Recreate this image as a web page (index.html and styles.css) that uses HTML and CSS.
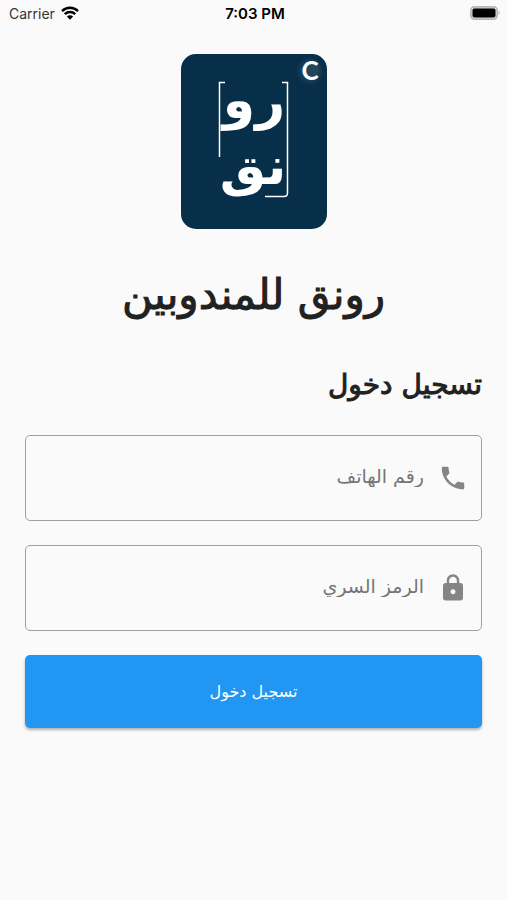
FILE: index.html
```html
<!DOCTYPE html>
<html lang="ar" dir="rtl">
<head>
    <meta charset="UTF-8">
    <meta name="viewport" content="width=device-width, initial-scale=1.0">
    <title>رونق للمندوبين</title>
    <link rel="stylesheet" href="styles.css">
</head>
<body>

    <header class="status-bar" dir="ltr">
        <div class="carrier">
            <span>Carrier</span>
            <svg class="wifi" viewBox="0 0 18 14" aria-hidden="true">
                <g fill="none" stroke="#000" stroke-width="2.4">
                    <path d="M1 5.1 A11.4 11.4 0 0 1 17 5.1"/>
                    <path d="M3.8 8.1 A7.4 7.4 0 0 1 14.2 8.1"/>
                </g>
                <path d="M9 13.8 L5.9 10.6 A4.4 4.4 0 0 1 12.1 10.6 Z"/>
            </svg>
        </div>
        <span class="time">7:03 PM</span>
        <div class="battery">
            <svg viewBox="0 0 31 14" width="31" height="14" aria-hidden="true">
                <rect x="0.7" y="0.7" width="26.6" height="12.6" rx="3.8" fill="#d0d0d0" stroke="#b5b5b5" stroke-width="1.4"/>
                <rect x="2.5" y="2.5" width="23" height="9" rx="2"/>
                <path d="M28.6 4.8 Q31 7 28.6 9.2 Z" fill="#b5b5b5"/>
            </svg>
        </div>
    </header>

    <main>
        <svg class="logo" viewBox="0 0 146 175" role="img" aria-label="رونق">
            <defs>
                <radialGradient id="glow">
                    <stop offset="0.5" stop-color="#234459"/>
                    <stop offset="1" stop-color="#082f49"/>
                </radialGradient>
            </defs>
            <rect width="146" height="175" rx="15" fill="#082f49"/>
            <circle cx="129" cy="17" r="14" fill="url(#glow)"/>
            <text class="logo-c" x="129" y="26">C</text>
            <g fill="none" stroke="#fff" stroke-width="1.5">
                <path d="M44 28.5 H38.5 V103"/>
                <path d="M101 28.5 H106.5 V139 Q106.5 142.5 103 142.5 H84"/>
            </g>
            <text class="logo-word" x="73" y="64">رو</text>
            <text class="logo-word" x="72" y="130">نق</text>
        </svg>

        <h1>رونق للمندوبين</h1>

        <form>
            <h2>تسجيل دخول</h2>

            <div class="field">
                <label for="phone" aria-label="رقم الهاتف">
                    <svg viewBox="0 0 24 24" aria-hidden="true">
                        <path d="M6.62 10.79c1.44 2.83 3.76 5.14 6.59 6.59l2.2-2.2c.27-.27.67-.36 1.02-.24 1.12.37 2.33.57 3.57.57.55 0 1 .45 1 1V20c0 .55-.45 1-1 1-9.39 0-17-7.61-17-17 0-.55.45-1 1-1h3.5c.55 0 1 .45 1 1 0 1.25.2 2.45.57 3.57.11.35.03.74-.25 1.02l-2.2 2.2z"/>
                    </svg>
                </label>
                <input type="tel" id="phone" dir="rtl" placeholder="رقم الهاتف">
            </div>

            <div class="field">
                <label for="password" aria-label="الرمز السري">
                    <svg viewBox="0 0 24 24" aria-hidden="true">
                        <path d="M18 8h-1V6c0-2.76-2.24-5-5-5S7 3.24 7 6v2H6c-1.1 0-2 .9-2 2v10c0 1.1.9 2 2 2h12c1.1 0 2-.9 2-2V10c0-1.1-.9-2-2-2zm-6 9c-1.1 0-2-.9-2-2s.9-2 2-2 2 .9 2 2-.9 2-2 2zm3.1-9H8.9V6c0-1.71 1.39-3.1 3.1-3.1 1.71 0 3.1 1.39 3.1 3.1v2z"/>
                    </svg>
                </label>
                <input type="password" id="password" placeholder="الرمز السري">
            </div>

            <button type="submit">تسجيل دخول</button>
        </form>
    </main>

</body>
</html>
```
FILE: styles.css
```css
* {
    box-sizing: border-box;
}
body {
    margin: 0;
    background-color: #fafafa;
    color: #212121;
    font-family: "DejaVu Sans", sans-serif;
}
.status-bar {
    display: grid;
    grid-template-columns: 1fr auto 1fr;
    align-items: center;
    height: 28px;
    padding: 0 6px 2px 9px;
    color: #000;
    font-family: Inter, "Liberation Sans", sans-serif;
    font-size: 14px;
}
.carrier {
    display: flex;
    align-items: center;
    gap: 6px;
    color: #333;
}
.wifi {
    width: 18px;
    height: 14px;
}
.time {
    font-size: 15px;
    font-weight: 600;
}
.battery {
    display: flex;
    justify-content: flex-end;
}
main {
    padding: 26px 25px;
}
.logo {
    display: block;
    width: 146px;
    margin: 0 auto;
}
.logo text {
    fill: #fff;
    text-anchor: middle;
}
.logo-c {
    font-family: Lato, sans-serif;
    font-size: 26px;
    font-weight: bold;
}
.logo-word {
    font-size: 52px;
    font-weight: bold;
}
h1,
h2 {
    font-weight: normal;
    -webkit-text-stroke: 1px #212121;
}
h1 {
    margin: 30px 0;
    font-size: 42px;
    line-height: 72px;
    text-align: center;
}
h2 {
    margin: 0 0 26px;
    font-size: 28px;
    line-height: 48px;
}
.field {
    display: flex;
    align-items: center;
    height: 86px;
    margin-bottom: 24px;
    padding: 0 13px;
    border: 1px solid #a0a0a0;
    border-radius: 5px;
}
.field:focus-within {
    border-color: #2196f3;
}
.field label {
    display: flex;
}
.field svg {
    width: 30px;
    height: 30px;
    fill: #858585;
}
.field input {
    flex: 1;
    min-width: 0;
    height: 100%;
    padding: 0 14px 4px;
    border: 0;
    outline: 0;
    background: none;
    color: inherit;
    font-family: inherit;
    font-size: 19px;
    line-height: 32px;
}
.field input::placeholder {
    color: #757575;
    line-height: 32px;
    opacity: 1;
}
button {
    width: 100%;
    height: 73px;
    border: 0;
    border-radius: 5px;
    background-color: #2196f3;
    box-shadow: 0 2px 3px rgba(0, 0, 0, 0.3);
    color: #fff;
    font-family: inherit;
    font-size: 16px;
    cursor: pointer;
}
```
